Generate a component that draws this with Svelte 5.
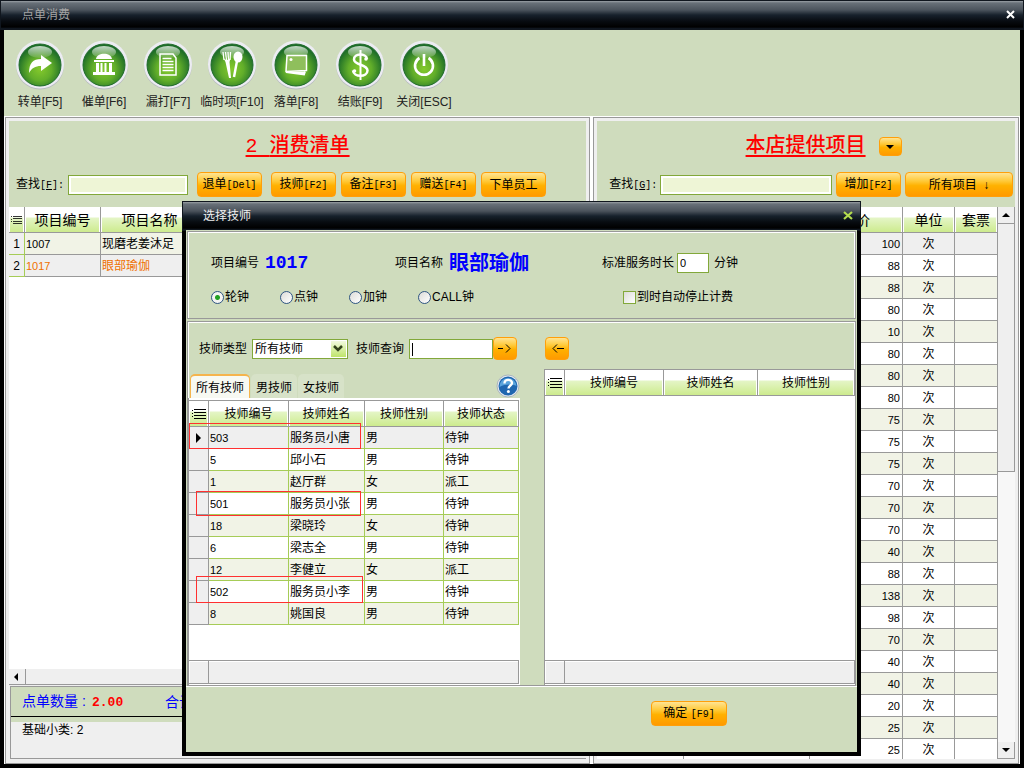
<script lang="ts">
  const tools = [
    { icon: 'share', label: '转单', key: '[F5]' },
    { icon: 'bank', label: '催单', key: '[F6]' },
    { icon: 'doc', label: '漏打', key: '[F7]' },
    { icon: 'fork', label: '临时项', key: '[F10]' },
    { icon: 'photo', label: '落单', key: '[F8]' },
    { icon: 'dollar', label: '结账', key: '[F9]' },
    { icon: 'power', label: '关闭', key: '[ESC]' }
  ];

  const orders = [
    { code: '1007', name: '现磨老姜沐足' },
    { code: '1017', name: '眼部瑜伽' }
  ];

  const prices = [100, 88, 88, 80, 10, 80, 80, 80, 75, 75, 75, 70, 70, 70, 40, 88, 138, 98, 70, 40, 40, 20, 25, 25];

  const staff = [
    ['503', '服务员小唐', '男', '待钟'],
    ['5', '邱小石', '男', '待钟'],
    ['1', '赵厅群', '女', '派工'],
    ['501', '服务员小张', '男', '待钟'],
    ['18', '梁晓玲', '女', '待钟'],
    ['6', '梁志全', '男', '待钟'],
    ['12', '李健立', '女', '派工'],
    ['502', '服务员小李', '男', '待钟'],
    ['8', '姚国良', '男', '待钟']
  ];

  const clocks = ['轮钟', '点钟', '加钟', 'CALL钟'];
  const tabs = ['所有技师', '男技师', '女技师'];

  let clock = $state('轮钟');
  let tab = $state('所有技师');
  let minutes = $state('0');
</script>

{#snippet listIcon()}
  <svg class="list-icon" width="14" height="10" viewBox="0 0 14 10" shape-rendering="crispEdges">
    <path d="M0 1h1M0 4h1M0 7h1M2 0.5h12M2 3.5h12M2 6.5h12M2 9.5h12" stroke="#000" />
  </svg>
{/snippet}

<div class="window">
  <header class="titlebar">
    <span class="main-title">点单消费</span>
    <button class="close" aria-label="关闭">
      <svg width="10" height="10" viewBox="0 0 10 10"><path d="M1 1l7 7M8 1l-7 7" stroke="#fff" stroke-width="2" /></svg>
    </button>
  </header>

  <nav class="toolbar">
    {#each tools as tool}
      <button class="tool">
        <svg width="50" height="50" viewBox="0 0 50 50">
          <defs>
            <radialGradient id="ball-{tool.icon}" cx="50%" cy="60%" r="55%">
              <stop offset="0" stop-color="#84c92c" />
              <stop offset="0.5" stop-color="#62ae2a" />
              <stop offset="1" stop-color="#1c6c28" />
            </radialGradient>
            <linearGradient id="shine-{tool.icon}" x1="0" y1="0" x2="0" y2="1">
              <stop offset="0" stop-color="#fff" stop-opacity="0.75" />
              <stop offset="1" stop-color="#fff" stop-opacity="0.1" />
            </linearGradient>
          </defs>
          <circle cx="25" cy="25.5" r="24" fill="#b9bcc2" />
          <circle cx="25" cy="24.5" r="24" fill="#ececf2" />
          <circle cx="25" cy="25" r="21" fill="url(#ball-{tool.icon})" stroke="#1f6b2b" />
          <ellipse cx="25" cy="12" rx="12" ry="6" fill="url(#shine-{tool.icon})" />
          {#if tool.icon === 'share'}
            <path d="M14 33c0-10 4-14 12-14v-4l11 8-11 8v-5c-6 0-9 2-12 7z" fill="#fff" />
          {:else if tool.icon === 'bank'}
            <path d="M17 19c1-7 15-7 16 0zM15 20h20v2H15zM17 23h3v9h-3zM21.500 23h2v9h-2zM25.500 23h2v9h-2zM30 23h3v9h-3zM14 32h22v3H14z" fill="#fff" />
          {:else if tool.icon === 'doc'}
            <path d="M17 14h13l3 4v17H17z" fill="none" stroke="#fff" stroke-width="1.500" />
            <path d="M19.500 18.500h9M19.500 21.500h11M19.500 24.500h11M19.500 27.500h11M19.500 30.500h11" stroke="#fff" stroke-width="1.300" />
          {:else if tool.icon === 'fork'}
            <path d="M16 12l1 8M18.500 12l1 8M21 12l0.500 8M23.500 12l-0.500 8" stroke="#fff" stroke-width="1.300" />
            <path d="M16.500 18q3.500 4 7 0l-1 4 1.500 16h-2L18.500 22z" fill="#fff" />
            <ellipse cx="31" cy="17" rx="4.500" ry="5.500" fill="#fff" />
            <path d="M30 21l-3 16" stroke="#fff" stroke-width="2.500" />
          {:else if tool.icon === 'photo'}
            <path d="M15 32l18 2.500 1-3" stroke="#fff" stroke-width="2" fill="#fff" />
            <path d="M16 15.500h19.500v15L15 31.500z" fill="#8fbf5c" stroke="#fff" stroke-width="1.500" />
            <circle cx="20" cy="19.500" r="1.500" fill="#fff" />
          {:else if tool.icon === 'dollar'}
            <path d="M32 19c-1-6-13-6-13 0.500 0 6 13.500 4.500 13.500 11 0 7-14 7-14.500 0" fill="none" stroke="#fff" stroke-width="2.500" />
            <path d="M25.500 10v30" stroke="#fff" stroke-width="2" />
            <circle cx="31" cy="19" r="1.800" fill="#fff" />
            <circle cx="19.500" cy="31" r="1.800" fill="#fff" />
          {:else}
            <path d="M20.500 18a9 9 0 1 0 9 0M25 14v12" fill="none" stroke="#fff" stroke-width="2.600" />
          {/if}
        </svg>
        <span class="tool-label">{tool.label}{tool.key}</span>
      </button>
    {/each}
  </nav>

  <main class="panels">
    <section class="panel orders">
      <div class="panel-head">
        <h2><span class="num">2&nbsp;</span>消费清单</h2>
        <div class="search">
          <label for="find-order">查找<span class="key">[<u>F</u>]:</span></label>
          <input id="find-order" class="box pale" type="text" />
          <button class="btn first">退单<span class="key">[Del]</span></button>
          <button class="btn">技师<span class="key">[F2]</span></button>
          <button class="btn">备注<span class="key">[F3]</span></button>
          <button class="btn">赠送<span class="key">[F4]</span></button>
          <button class="btn">下单员工</button>
        </div>
      </div>
      <div class="sheet">
        <table class="big">
          <colgroup><col class="c-mark" /><col class="c-code" /><col class="c-name" /><col /></colgroup>
          <thead>
            <tr><th>{@render listIcon()}</th><th>项目编号</th><th>项目名称</th><th></th></tr>
          </thead>
          <tbody>
            {#each orders as order, i}
              <tr class:hot={i === 1}>
                <td class="mark">{i + 1}</td><td>{order.code}</td><td class="name">{order.name}</td><td></td>
              </tr>
            {/each}
          </tbody>
        </table>
      </div>
      <div class="hscroll"><button class="arrow left" aria-label="向左"></button></div>
      <div class="totals">
        <div class="sums">
          <span class="sum">点单数量<span class="colon">:</span><b>2.00</b></span>
          <span>合计</span>
        </div>
        <div class="sub">基础小类: 2</div>
      </div>
    </section>

    <section class="panel items">
      <div class="panel-head">
        <div class="heading">
          <h2>本店提供项目</h2>
          <button class="btn drop" aria-label="展开"><i class="down"></i></button>
        </div>
        <div class="search">
          <label for="find-item">查找<span class="key">[<u>G</u>]:</span></label>
          <input id="find-item" class="box pale" type="text" />
          <button class="btn">增加<span class="key">[F2]</span></button>
          <button class="btn wide">所有项目 &nbsp;↓</button>
        </div>
      </div>
      <div class="scroller">
        <div class="sheet">
          <table class="big">
            <colgroup><col class="c-a" /><col class="c-b" /><col /><col class="c-unit" /><col class="c-ticket" /></colgroup>
            <thead>
              <tr><th></th><th></th><th>单价</th><th>单位</th><th>套票</th></tr>
            </thead>
            <tbody>
              {#each prices as price}
                <tr><td></td><td></td><td class="price">{price}</td><td class="unit">次</td><td></td></tr>
              {/each}
            </tbody>
          </table>
        </div>
        <div class="vscroll">
          <button class="arrow up" aria-label="向上"></button>
          <div class="thumb"></div>
          <button class="arrow dn" aria-label="向下"></button>
        </div>
      </div>
    </section>
  </main>

  <div class="dialog" role="dialog" aria-label="选择技师">
    <header class="titlebar">
      <span>选择技师</span>
      <button class="close" aria-label="关闭">
        <svg width="10" height="10" viewBox="0 0 10 10"><path d="M1 1l8 7M9 1l-8 7" stroke="#b4dc4e" stroke-width="2.200" /></svg>
      </button>
    </header>

    <div class="group info">
      <div class="facts">
        <span class="fact code">项目编号<b class="num">1017</b></span>
        <span class="fact title">项目名称<b>眼部瑜伽</b></span>
        <label for="minutes">标准服务时长</label>
        <input id="minutes" class="box" type="text" bind:value={minutes} />
        <span>分钟</span>
      </div>
      <div class="choices">
        {#each clocks as item}
          <label class="choice"><input type="radio" name="clock" value={item} bind:group={clock} />{item}</label>
        {/each}
        <label class="auto"><input type="checkbox" />到时自动停止计费</label>
      </div>
    </div>

    <div class="group pick">
      <div class="side">
        <div class="filter">
          <label for="kind">技师类型</label>
          <span class="select">
            <select id="kind" class="box"><option>所有技师</option></select>
            <svg width="15" height="16" viewBox="0 0 15 16"><path d="M3 5l4 4 4-4" fill="none" stroke="#33441c" stroke-width="2.500" /></svg>
          </span>
          <label for="query">技师查询</label>
          <input id="query" class="box query" type="text" />
          <button class="btn move" aria-label="添加"><svg width="14" height="9" viewBox="0 0 14 9"><path d="M0 4.500h5M8 0.500l4 4-4 4" fill="none" stroke="#000" /></svg></button>
        </div>
        <div class="tabs">
          {#each tabs as name}
            <button class="tab" class:active={tab === name} onclick={() => (tab = name)}>{name}</button>
          {/each}
          <button class="help" aria-label="帮助">
            <svg width="24" height="24" viewBox="0 0 24 24">
              <circle cx="12" cy="12" r="11" fill="#e6ebf0" stroke="#a9b4bd" />
              <circle cx="12" cy="12" r="9.500" fill="#1f66b0" />
              <path d="M3.500 13a8.500 8.500 0 0 1 17-1c-5-2-11-2-17 1z" fill="#5aa3dc" />
              <path d="M8.500 9.500c0-5 7.500-4.500 7.500-0.500 0 2.500-3.500 2.500-3.500 5.500" fill="none" stroke="#fff" stroke-width="2.400" />
              <circle cx="12.400" cy="17.500" r="1.500" fill="#fff" />
            </svg>
          </button>
        </div>
        <div class="listing">
          <table class="small">
            <colgroup><col class="s-mark" /><col class="s-code" /><col class="s-name" /><col class="s-sex" /><col /></colgroup>
            <thead>
              <tr><th>{@render listIcon()}</th><th>技师编号</th><th>技师姓名</th><th>技师性别</th><th>技师状态</th></tr>
            </thead>
            <tbody>
              {#each staff as row, i}
                <tr>
                  <td class="mark">{#if i === 0}<i class="pointer"></i>{/if}</td>
                  {#each row as cell}<td>{cell}</td>{/each}
                </tr>
              {/each}
            </tbody>
          </table>
          <div class="foot"><span></span></div>
          <div class="note one"></div>
          <div class="note two"></div>
          <div class="note three"></div>
        </div>
      </div>

      <div class="side">
        <div class="filter back">
          <button class="btn move" aria-label="移除"><svg width="14" height="9" viewBox="0 0 14 9"><path d="M14 4.500H7M7 0.500l-4 4 4 4" fill="none" stroke="#000" /></svg></button>
        </div>
        <div class="listing chosen">
          <table class="small">
            <colgroup><col class="s-mark" /><col class="s-third" /><col class="s-mid" /><col /></colgroup>
            <thead>
              <tr><th>{@render listIcon()}</th><th>技师编号</th><th>技师姓名</th><th>技师性别</th></tr>
            </thead>
          </table>
          <div class="foot"><span></span></div>
        </div>
      </div>
    </div>

    <footer class="confirm">
      <button class="btn">确定 <span class="key">[F9]</span></button>
    </footer>
  </div>
</div>

<style>
  :global(body) {
    margin: 0;
    background: #000;
  }

  .window, .window * {
    box-sizing: border-box;
  }

  .window {
    position: relative;
    display: flex;
    flex-direction: column;
    height: 100vh;
    overflow: hidden;
    padding: 0 4px 4px;
    background: #000;
    color: #000;
    font-family: "Liberation Sans", "Noto Sans CJK SC", sans-serif;
    font-size: 12px;
    line-height: 16px;
  }

  button, input, select {
    margin: 0;
    padding: 0;
    color: inherit;
    font: inherit;
  }

  button {
    border: none;
    background: none;
    white-space: nowrap;
  }

  .titlebar {
    display: flex;
    flex: none;
    align-items: center;
    justify-content: space-between;
    height: 30px;
    margin: 0 -4px;
    padding: 0 7px 0 21px;
    border: 1px solid #10161e;
    background: linear-gradient(#9aa0a5 0, #687078 2px, #4b535c 9px, #17212c 14px, #080c11 20px, #000 26px, #141d29 28px);
    color: #f0f0f0;
  }

  .main-title {
    color: #a4a4a4;
  }

  .close {
    display: flex;
  }

  .toolbar {
    display: flex;
    flex: none;
    height: 87px;
    padding: 10px 4px 0;
    border-bottom: 1px solid #fff;
    background: #cfdcbd;
  }

  .tool {
    display: flex;
    flex: none;
    flex-direction: column;
    align-items: center;
    gap: 4px;
    width: 64px;
  }

  .tool-label {
    color: #222;
  }

  .panels {
    display: flex;
    flex: 1;
    gap: 3px;
    min-height: 0;
    padding: 0 1px;
    background: #fff;
  }

  .panel {
    display: flex;
    flex-direction: column;
    min-width: 0;
    padding: 3px 3px 4px;
    border: 1px solid #999;
    background: #efefef;
  }

  .orders {
    flex: 587 1 0;
  }

  .items {
    flex: 425 1 0;
  }

  .panel-head {
    flex: none;
    height: 86px;
    background: #cfdcbd;
  }

  h2 {
    height: 51px;
    margin: 0;
    padding-top: 10px;
    color: #f00;
    font-size: 20px;
    font-weight: 500;
    line-height: 28px;
    text-align: center;
    text-decoration: underline;
    text-underline-offset: 3px;
  }

  .num {
    font-family: "Liberation Mono", monospace;
  }

  .heading {
    display: flex;
    justify-content: center;
    gap: 13px;
    padding-left: 35px;
  }

  .heading .drop {
    width: 23px;
    height: 19px;
    margin-top: 16px;
  }

  .search {
    display: flex;
    align-items: center;
    height: 25px;
    padding: 0 2px 0 7px;
    gap: 5px;
  }

  .search label {
    flex: none;
    width: 47px;
    white-space: nowrap;
  }

  .items .search {
    gap: 4px;
    padding-left: 12px;
  }

  .items .search input {
    flex: 1;
    min-width: 0;
  }

  .key {
    font-family: "Liberation Mono", monospace;
    font-size: 10px;
  }

  .box {
    width: 120px;
    height: 20px;
    padding: 0 2px;
    border: 1px solid #82a83a;
    border-radius: 0;
    outline: none;
    background: #fff;
  }

  .pale {
    background: #eef5d6;
    box-shadow: inset 0 0 0 2px #fff;
  }

  .btn {
    flex: none;
    width: 65px;
    height: 25px;
    border: 1px solid #ff9f0a;
    border-radius: 4px;
    background: linear-gradient(#ffe493, #ffc938 35%, #ffb100 55%, #ff9a00);
  }

  .first {
    margin: 0 4px;
  }

  .search .wide {
    width: 108px;
  }

  .down {
    display: inline-block;
    border: 4px solid transparent;
    border-top-color: #000;
    border-bottom: 0;
    vertical-align: middle;
  }

  .sheet {
    flex: 1;
    min-height: 0;
    overflow: hidden;
    background: #fff;
  }

  table {
    width: 100%;
    border-collapse: separate;
    border-spacing: 0;
    table-layout: fixed;
  }

  th {
    height: 26px;
    padding: 0;
    overflow: hidden;
    border-right: 1px solid #999;
    border-bottom: 1px solid #999;
    background: linear-gradient(#fff 10px, #e4f5c6 11px, #cdeb8e);
    box-shadow: inset 1px 0 #fff, inset -1px 0 #fff;
    font-weight: normal;
    line-height: 20px;
    white-space: nowrap;
  }

  .big th {
    font-size: 14px;
  }

  td {
    height: 22px;
    padding: 0 1px;
    overflow: hidden;
    border-right: 1px solid #999;
    border-bottom: 1px solid #999;
    font-size: 11px;
    line-height: 18px;
    white-space: nowrap;
  }

  .list-icon {
    display: block;
    margin: 0 auto;
  }

  .c-mark { width: 16px; }
  .c-code { width: 76px; }
  .c-name { width: 98px; }
  .c-a { width: 87px; }
  .c-b { width: 126px; }
  .c-unit { width: 52px; }
  .c-ticket { width: 43px; }
  .s-mark { width: 20px; }
  .s-code { width: 80px; }
  .s-name { width: 76px; }
  .s-sex { width: 79px; }
  .s-third { width: 99px; }
  .s-mid { width: 94px; }

  .orders .list-icon {
    width: 11px;
  }

  .orders tbody tr:first-child td {
    background: #f1f3e6;
  }

  .orders tbody tr.hot td {
    background: #efefef;
    color: #f07000;
  }

  .orders tbody tr td.mark {
    border-color: #a6cc57;
    background: #efefef;
    color: #000;
    font-size: 12px;
    text-align: center;
  }

  .orders tbody tr td.name {
    font-size: 12px;
  }

  .hscroll {
    flex: none;
    height: 16px;
    border-bottom: 1px solid #999;
  }

  .arrow {
    position: relative;
    display: block;
    flex: none;
    width: 17px;
    height: 17px;
    border-right: 1px solid #999;
    border-bottom: 1px solid #999;
    background: #efefef;
  }

  .arrow::after {
    content: "";
    position: absolute;
    top: 6px;
    left: 4px;
    border: 4px solid transparent;
  }

  .left {
    height: 15px;
    border-bottom: none;
  }

  .left::after {
    top: 4px;
    left: 5px;
    border-right-color: #000;
    border-left: 0;
  }

  .up::after {
    border-bottom-color: #000;
    border-top: 0;
  }

  .dn::after {
    border-top-color: #000;
    border-bottom: 0;
  }

  .totals {
    flex: none;
    height: 73px;
    margin: 1px 0 0 1px;
    border-top: 1px solid #999;
    border-bottom: 1px solid #999;
    border-left: 1px solid #999;
    background: linear-gradient(#cfdcbd 35px, #efefef 35px);
  }

  .sums {
    display: flex;
    align-items: center;
    height: 30px;
    padding-left: 11px;
    border-bottom: 1px solid #000;
    color: #00f;
    font-size: 14px;
  }

  .sum {
    width: 143px;
  }

  .colon {
    display: inline-block;
    width: 14px;
    padding-left: 4px;
  }

  .sums b {
    color: #f00;
    font-family: "Liberation Mono", monospace;
    font-size: 13px;
  }

  .sub {
    padding: 5px 11px;
  }

  .scroller {
    display: flex;
    flex: 1;
    min-height: 0;
  }

  .items tbody tr:nth-child(odd) td {
    background: #f1f3e6;
  }

  .items tbody tr:first-child td {
    background: #efefef;
  }

  .price {
    padding-right: 2px;
    text-align: right;
  }

  .unit {
    font-size: 12px;
    text-align: center;
  }

  .vscroll {
    display: flex;
    flex: none;
    flex-direction: column;
    width: 17px;
    background: #f7f7f7;
  }

  .thumb {
    height: 248px;
    border: 1px solid #999;
    border-width: 0 1px 1px 0;
    background: #efefef;
  }

  .dn {
    margin-top: auto;
  }

  .dialog {
    position: absolute;
    top: 201px;
    right: 163px;
    bottom: 12px;
    left: 182px;
    display: flex;
    flex-direction: column;
    padding: 0 4px 4px;
    background: #000;
  }

  .dialog .titlebar {
    padding: 0 7px 0 20px;
  }

  .group {
    margin: 0 1px;
    border: 1px solid #999;
    outline: 1px solid #cfdcbd;
    background: #cfdcbd;
    box-shadow: inset 1px 1px #fff, inset -1px 0 #fff;
  }

  .info {
    flex: none;
    height: 88px;
    padding: 20px 0 0 23px;
  }

  .facts {
    display: flex;
    align-items: center;
    height: 22px;
  }

  .fact {
    display: flex;
    flex: none;
    align-items: center;
    gap: 6px;
  }

  .fact b {
    color: #00f;
    font-size: 20px;
    line-height: 22px;
  }

  .fact .num {
    font-size: 18px;
  }

  .code {
    width: 184px;
  }

  .title {
    width: 207px;
  }

  .facts input {
    width: 32px;
    margin: 0 5px 0 3px;
    font-size: 11px;
  }

  .choices {
    display: flex;
    align-items: center;
    height: 16px;
    margin-top: 15px;
  }

  .choice, .auto {
    display: flex;
    align-items: center;
    gap: 1px;
  }

  .choice {
    width: 69px;
  }

  .auto {
    margin-left: 136px;
  }

  input[type="radio"], input[type="checkbox"] {
    width: 13px;
    height: 13px;
    appearance: none;
    border: 1px solid #2f5583;
    border-radius: 50%;
    background: linear-gradient(135deg, #dcdcd8, #fff);
  }

  input[type="radio"]:checked {
    background: radial-gradient(circle, #22a022 2px, #f4f4f2 3px);
  }

  input[type="checkbox"] {
    border-color: #82a83a;
    border-radius: 0;
  }

  .pick {
    display: grid;
    flex: 1;
    grid-template-columns: 332fr 311fr;
    gap: 24px;
    min-height: 0;
    margin-top: 2px;
    padding-top: 1px;
  }

  .side {
    display: flex;
    flex-direction: column;
    min-width: 0;
    min-height: 0;
  }

  .filter {
    display: flex;
    flex: none;
    align-items: center;
    height: 23px;
    margin: 14px 0;
    padding-left: 11px;
    gap: 5px;
  }

  .select {
    position: relative;
    display: flex;
    margin-right: 3px;
  }

  select.box {
    width: 96px;
    appearance: none;
  }

  .select svg {
    position: absolute;
    top: 2px;
    right: 2px;
    background: linear-gradient(#f2fadf, #bfe46a);
    pointer-events: none;
  }

  .query {
    width: 84px;
    background: linear-gradient(#000, #000) 2px 3px / 1px 13px no-repeat #fff;
  }

  .move {
    display: flex;
    align-items: center;
    justify-content: center;
    width: 24px;
    height: 23px;
  }

  .query + .move {
    margin-left: -5px;
  }

  .back {
    margin-bottom: 9px;
    padding-left: 1px;
  }

  .tabs {
    display: flex;
    flex: none;
    gap: 1px;
    height: 24px;
    padding-left: 2px;
  }

  .tab {
    height: 24px;
    padding: 3px 5px 0;
    border-radius: 5px 5px 0 0;
    background: #d7e2c8;
  }

  .tab.active {
    border: 1px solid #f5b44c;
    border-top-width: 2px;
    border-bottom: 0;
    background: #f7f9f2;
    padding-top: 1px;
  }

  .help {
    height: 24px;
    margin-left: auto;
  }

  .listing {
    position: relative;
    display: flex;
    flex: 1;
    flex-direction: column;
    justify-content: space-between;
    min-height: 0;
    padding: 2px 1px 1px 0;
    background: #fff;
    border-left: 1px solid #999;
  }

  .listing table {
    border-top: 1px solid #999;
  }

  .chosen {
    padding-top: 0;
    padding-right: 0;
  }

  .small tbody td {
    border-color: #a6cc57;
    font-size: 12px;
  }

  .small tbody td:nth-child(2) {
    font-size: 11px;
  }

  .small tbody tr:nth-child(odd) td {
    background: #f1f3e6;
  }

  .small tbody tr:first-child td,
  .small tbody tr td.mark {
    background: #efefef;
  }

  .small tbody td.mark {
    border-color: #999;
    text-align: center;
  }

  .pointer {
    display: inline-block;
    border: 5px solid transparent;
    border-left-color: #000;
    border-right: 0;
    vertical-align: middle;
  }

  .foot {
    flex: none;
    height: 24px;
    border: 1px solid #999;
    border-left: 0;
    background: #efefef;
    box-shadow: inset 1px 1px #fff;
  }

  .foot span {
    display: block;
    width: 20px;
    height: 100%;
    border-right: 1px solid #999;
  }

  .note {
    position: absolute;
    left: 7px;
    width: 165px;
    height: 25px;
    border: 1px solid #ff3030;
    pointer-events: none;
  }

  .one {
    top: 25px;
    left: 0;
    width: 172px;
    height: 26px;
  }

  .two {
    top: 93px;
  }

  .three {
    top: 178px;
    width: 167px;
    height: 27px;
  }

  .confirm {
    flex: none;
    height: 66px;
    padding: 14px 130px 0 0;
    background: #cfdcbd;
    border-top: 1px solid #fff;
    text-align: right;
  }

  .confirm .btn {
    width: 76px;
  }
</style>
